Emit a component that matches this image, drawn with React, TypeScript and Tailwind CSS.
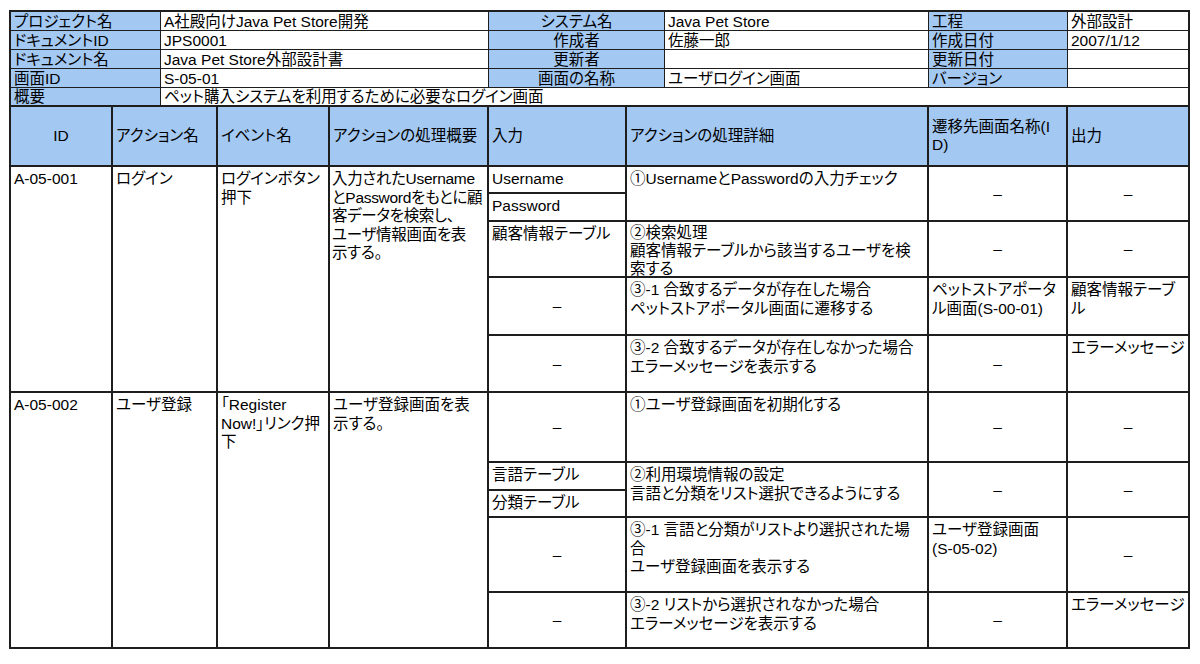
import React from "react";

type C = { t?: React.ReactNode; cls?: string; dash?: boolean };

function TopCell({ children, blue, center, cls = "" }: { children?: React.ReactNode; blue?: boolean; center?: boolean; cls?: string }) {
  return (
    <div
      className={`flex items-end whitespace-nowrap border-r border-b border-[#1e1e1e] px-[3px] leading-[17px] ${
        blue ? "bg-[#a3c8f2]" : "bg-white"
      } ${center ? "justify-center" : ""} ${cls}`}
    >
      {children}
    </div>
  );
}

function HeadCell({ children, center }: { children?: React.ReactNode; center?: boolean }) {
  return (
    <div
      className={`flex items-center whitespace-nowrap border-r-2 border-b-2 border-[#1e1e1e] bg-[#a3c8f2] px-[3px] leading-[18px] ${
        center ? "justify-center" : ""
      }`}
    >
      <div>{children}</div>
    </div>
  );
}

function BodyCell({ c }: { c: C }) {
  if (c.dash) {
    return (
      <div className={`flex items-center justify-center border-r-2 border-b-2 border-[#1e1e1e] bg-white ${c.cls ?? ""}`}>
        <span className="leading-[18px]">–</span>
      </div>
    );
  }
  return (
    <div
      className={`whitespace-nowrap border-r-2 border-b-2 border-[#1e1e1e] bg-white px-[3px] pt-[3px] leading-[18.5px] ${c.cls ?? ""}`}
    >
      {c.t}
    </div>
  );
}

const rowA: C[] = [
  { t: "A-05-001", cls: "row-span-5" },
  { t: "ログイン", cls: "row-span-5" },
  { t: <>ログインボタン<br />押下</>, cls: "row-span-5" },
  {
    t: (
      <>
        入力されたUsername
        <br />
        とPasswordをもとに顧
        <br />
        客データを検索し、
        <br />
        ユーザ情報画面を表
        <br />
        示する。
      </>
    ),
    cls: "row-span-5 !px-[2px] tracking-[-0.3px]",
  },
  { t: "Username" },
  { t: "①UsernameとPasswordの入力チェック", cls: "row-span-2" },
  { dash: true, cls: "row-span-2" },
  { dash: true, cls: "row-span-2" },
  { t: "Password" },
  { t: "顧客情報テーブル" },
  { t: <>②検索処理<br />顧客情報テーブルから該当するユーザを検<br />索する</>, cls: "!pt-[2px] !leading-[18px]" },
  { dash: true },
  { dash: true },
  { dash: true },
  { t: <>③-1 合致するデータが存在した場合<br />ペットストアポータル画面に遷移する</> },
  { t: <>ペットストアポータ<br />ル画面(S-00-01)</> },
  { t: <>顧客情報テーブ<br />ル</> },
  { dash: true },
  { t: <>③-2 合致するデータが存在しなかった場合<br />エラーメッセージを表示する</> },
  { dash: true },
  { t: "エラーメッセージ" },
];

const rowB: C[] = [
  { t: "A-05-002", cls: "row-span-5" },
  { t: "ユーザ登録", cls: "row-span-5" },
  { t: <>「Register<br />Now!」リンク押<br />下</>, cls: "row-span-5" },
  { t: <>ユーザ登録画面を表<br />示する。</>, cls: "row-span-5" },
  { dash: true },
  { t: "①ユーザ登録画面を初期化する" },
  { dash: true },
  { dash: true },
  { t: "言語テーブル" },
  { t: <>②利用環境情報の設定<br />言語と分類をリスト選択できるようにする</>, cls: "row-span-2" },
  { dash: true, cls: "row-span-2" },
  { dash: true, cls: "row-span-2" },
  { t: "分類テーブル" },
  { dash: true },
  { t: <>③-1 言語と分類がリストより選択された場<br />合<br />ユーザ登録画面を表示する</> },
  { t: <>ユーザ登録画面<br />(S-05-02)</> },
  { dash: true },
  { dash: true },
  { t: <>③-2 リストから選択されなかった場合<br />エラーメッセージを表示する</> },
  { dash: true },
  { t: "エラーメッセージ" },
];

export default function App() {
  return (
    <div className="min-h-[664px] w-[1200px] bg-white pl-[9px] pt-[10px] text-[15.5px] text-black font-[Liberation_Sans,Noto_Sans_CJK_JP,sans-serif] [font-feature-settings:'palt']">
      {/* Info header */}
      <div className="grid w-[1181px] grid-cols-[150px_328px_176px_264px_139px_122px] grid-rows-[19px_19px_19px_19px_19px] border-l-2 border-t-2 border-[#1e1e1e]">
        <TopCell blue>プロジェクト名</TopCell>
        <TopCell>A社殿向けJava Pet Store開発</TopCell>
        <TopCell blue center>システム名</TopCell>
        <TopCell>Java Pet Store</TopCell>
        <TopCell blue>工程</TopCell>
        <TopCell cls="border-r-2">外部設計</TopCell>

        <TopCell blue>ドキュメントID</TopCell>
        <TopCell>JPS0001</TopCell>
        <TopCell blue center>作成者</TopCell>
        <TopCell>佐藤一郎</TopCell>
        <TopCell blue>作成日付</TopCell>
        <TopCell cls="border-r-2">2007/1/12</TopCell>

        <TopCell blue>ドキュメント名</TopCell>
        <TopCell>Java Pet Store外部設計書</TopCell>
        <TopCell blue center>更新者</TopCell>
        <TopCell></TopCell>
        <TopCell blue>更新日付</TopCell>
        <TopCell cls="border-r-2"></TopCell>

        <TopCell blue>画面ID</TopCell>
        <TopCell>S-05-01</TopCell>
        <TopCell blue center>画面の名称</TopCell>
        <TopCell>ユーザログイン画面</TopCell>
        <TopCell blue>バージョン</TopCell>
        <TopCell cls="border-r-2"></TopCell>

        <TopCell blue cls="border-b-2">概要</TopCell>
        <TopCell cls="col-span-5 border-r-2 border-b-2">ペット購入システムを利用するために必要なログイン画面</TopCell>
      </div>

      {/* Main table */}
      <div className="grid w-[1181px] grid-cols-[102px_105px_112px_159px_138px_302px_139px_122px] grid-rows-[60px_27px_28px_56px_58px_57px_70px_28px_27px_75px_56px] border-l-2 border-[#1e1e1e]">
        <HeadCell center>ID</HeadCell>
        <HeadCell>アクション名</HeadCell>
        <HeadCell>イベント名</HeadCell>
        <HeadCell>アクションの処理概要</HeadCell>
        <HeadCell>入力</HeadCell>
        <HeadCell>アクションの処理詳細</HeadCell>
        <HeadCell>
          遷移先画面名称(I
          <br />
          D)
        </HeadCell>
        <HeadCell>出力</HeadCell>

        {rowA.map((c, i) => (
          <BodyCell key={"a" + i} c={c} />
        ))}
        {rowB.map((c, i) => (
          <BodyCell key={"b" + i} c={c} />
        ))}
      </div>
    </div>
  );
}
